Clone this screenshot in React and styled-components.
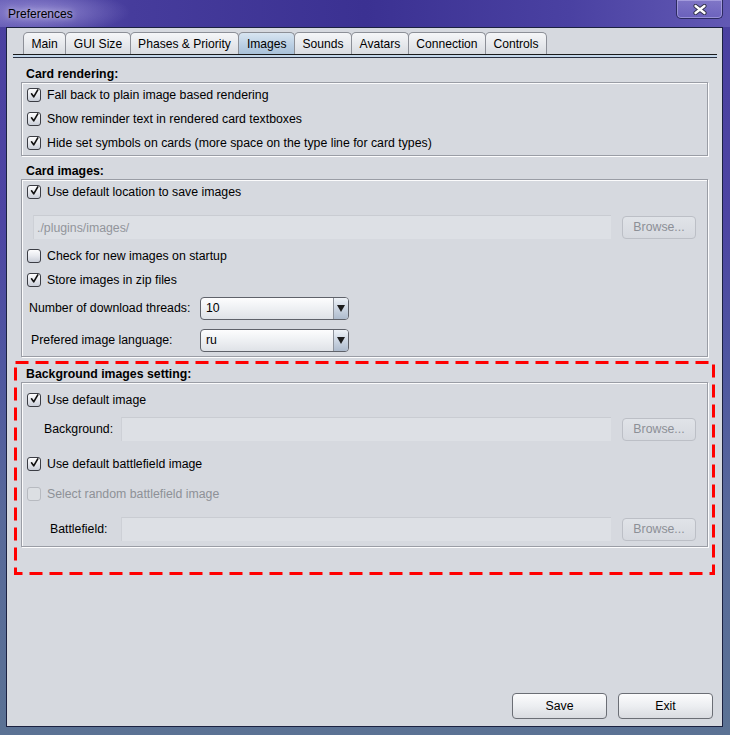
import React from "react";
import styled, { createGlobalStyle } from "styled-components";

const GlobalStyle = createGlobalStyle`
  body {
    margin: 0;
    font-family: "Liberation Sans", Arial, sans-serif;
  }
`;

const tabs = ["Main", "GUI Size", "Phases & Priority", "Images", "Sounds", "Avatars", "Connection", "Controls"];

const Check = ({ checked, disabled }) => (
  <Box $disabled={disabled}>
    {checked && (
      <svg width="14" height="14" viewBox="0 0 14 14">
        <path d="M3.2 6.8 L6 10.6 L11.2 1.8" fill="none" stroke="#111" strokeWidth="2.1" strokeLinecap="round" strokeLinejoin="round" />
      </svg>
    )}
  </Box>
);

const CheckRow = ({ label, checked, disabled, gap }) => (
  <Row $gap={gap}>
    <Check checked={checked} disabled={disabled} />
    <Label $disabled={disabled}>{label}</Label>
  </Row>
);

const Combo = ({ value }) => (
  <ComboBox>
    <ComboText>{value}</ComboText>
    <ComboArrow>
      <svg width="8" height="7" viewBox="0 0 8 7">
        <path d="M0 0 H8 L4 7 Z" fill="#1c1c1c" />
      </svg>
    </ComboArrow>
  </ComboBox>
);

const App = () => {
  return (
    <Window>
      <GlobalStyle />
      <TitleBar>
        <Title>Preferences</Title>
        <CloseButton>
          <svg width="14" height="11" viewBox="0 0 14 11">
            <path d="M2.5 2 L11.5 9 M11.5 2 L2.5 9" stroke="#33334a" strokeWidth="4.2" strokeLinecap="round" />
            <path d="M2.5 2 L11.5 9 M11.5 2 L2.5 9" stroke="#fff" strokeWidth="2.3" strokeLinecap="round" />
          </svg>
        </CloseButton>
      </TitleBar>
      <Panel>
        <TabStrip>
          {tabs.map((t) => (
            <Tab key={t} $active={t === "Images"}>{t}</Tab>
          ))}
        </TabStrip>
        <TabLine />
        <Content>
          <SectionTitle>Card rendering:</SectionTitle>
          <Group>
            <CheckRow checked label="Fall back to plain image based rendering" />
            <CheckRow checked label="Show reminder text in rendered card textboxes" />
            <CheckRow checked label="Hide set symbols on cards (more space on the type line for card types)" />
          </Group>

          <SectionTitle>Card images:</SectionTitle>
          <Group>
            <CheckRow checked label="Use default location to save images" />
            <FieldRow $left={11} $top={11} $bottom={5}>
              <Field>./plugins/images/</Field>
              <Browse>Browse...</Browse>
            </FieldRow>
            <CheckRow label="Check for new images on startup" />
            <CheckRow checked label="Store images in zip files" />
            <ComboRow>
              <ComboLabel $pad={7}>Number of download threads:</ComboLabel>
              <Combo value="10" />
            </ComboRow>
            <ComboRow>
              <ComboLabel $pad={9}>Prefered image language:</ComboLabel>
              <Combo value="ru" />
            </ComboRow>
          </Group>

          <Highlight>
            <DashFrame width="701" height="214" viewBox="0 0 701 214">
              <rect x="1.5" y="1.5" width="698" height="211" fill="none" stroke="#ff0000" strokeWidth="3" strokeDasharray="13 7" />
            </DashFrame>
            <SectionTitle>Background images setting:</SectionTitle>
            <Group $padTop={5}>
              <CheckRow checked label="Use default image" />
              <FieldRow $top={5} $bottom={11}>
                <FieldLabel $pad={22}>Background:</FieldLabel>
                <Field />
                <Browse>Browse...</Browse>
              </FieldRow>
              <CheckRow checked label="Use default battlefield image" />
              <CheckRow disabled gap={6} label="Select random battlefield image" />
              <FieldRow $top={11} $bottom={5}>
                <FieldLabel $pad={28}>Battlefield:</FieldLabel>
                <Field />
                <Browse>Browse...</Browse>
              </FieldRow>
            </Group>
          </Highlight>
        </Content>
        <Footer>
          <Button>Save</Button>
          <Button>Exit</Button>
        </Footer>
      </Panel>
    </Window>
  );
};

const Window = styled.div`
  width: 730px;
  height: 735px;
  display: flex;
  flex-direction: column;
  overflow: hidden;
  background: linear-gradient(180deg, #4a40a0 0%, #4d45a3 30%, #4f57a0 50%, #58699a 70%, #5b7294 100%);
`;

const TitleBar = styled.div`
  height: 27px;
  flex-shrink: 0;
  display: flex;
  align-items: flex-start;
  justify-content: space-between;
  padding: 0 7px 0 8px;
  background:
    radial-gradient(ellipse 90px 22px at 40px 12px, rgba(190, 180, 240, 0.55), rgba(190, 180, 240, 0) 100%),
    linear-gradient(90deg, #5e55b0 0%, #463c9c 18%, #3b3192 50%, #4a41a2 78%, #6259b4 100%);
`;

const Title = styled.div`
  font-family: "Liberation Sans", Arial, sans-serif;
  font-size: 12px;
  color: #000;
  line-height: 14px;
  padding-top: 7px;
  text-shadow: 0 0 6px rgba(255, 255, 255, 0.8);
`;

const CloseButton = styled.div`
  width: 45px;
  height: 18px;
  display: flex;
  align-items: center;
  justify-content: center;
  border: 1px solid #2c2a60;
  border-top: none;
  border-radius: 0 0 5px 5px;
  background: linear-gradient(180deg, rgba(160, 150, 220, 0.5), rgba(120, 110, 200, 0.5));
  box-shadow: inset 0 0 0 1px rgba(220, 215, 255, 0.4);
`;

const Panel = styled.div`
  flex: 1;
  margin: 0 7px 8px 6px;
  border: 1px solid #1b2140;
  background: #d6d9df;
  display: flex;
  flex-direction: column;
  min-height: 0;
`;

const TabStrip = styled.div`
  display: flex;
  padding: 4px 0 0 16px;
  height: 22px;
`;

const Tab = styled.div`
  height: 22px;
  box-sizing: border-box;
  padding: 0 7.5px;
  margin-right: -1px;
  display: flex;
  align-items: center;
  font-size: 12.1px;
  color: #000;
  border: 1px solid #8c8f97;
  border-bottom: none;
  border-radius: 5px 5px 0 0;
  background: ${(p) =>
    p.$active
      ? "linear-gradient(180deg, #d8e5f1 0%, #bcd0e4 55%, #a9c1d9 100%)"
      : "linear-gradient(180deg, #f5f6f8 0%, #e6e8ec 55%, #d9dce1 100%)"};
`;

const TabLine = styled.div`
  height: 2px;
  margin: 0 5px 0 6px;
  border-top: 1px solid #1a1a1a;
  border-bottom: 1px solid #2a3040;
  background: #c4d7ea;
`;

const Content = styled.div`
  padding: 1px 14px 0;
  display: flex;
  flex-direction: column;
`;

const SectionTitle = styled.div`
  height: 23px;
  box-sizing: border-box;
  padding: 7px 0 0 5px;
  font-size: 12.3px;
  line-height: 16px;
  font-weight: bold;
  color: #000;
`;

const Group = styled.div`
  border: 1px solid #9a9da5;
  box-shadow: 1px 1px 0 #fdfdfe, inset 1px 1px 0 #fbfbfc;
  padding-top: ${(p) => p.$padTop || 0}px;
  display: flex;
  flex-direction: column;
`;

const Row = styled.div`
  height: 24px;
  margin-top: ${(p) => p.$gap || 0}px;
  display: flex;
  align-items: center;
  padding-left: 5px;
`;

const Box = styled.div`
  width: 14px;
  height: 14px;
  box-sizing: border-box;
  border: 1px solid ${(p) => (p.$disabled ? "#b7bac0" : "#3b3d44")};
  border-radius: 3px;
  background: ${(p) =>
    p.$disabled
      ? "#dcdfe3"
      : "linear-gradient(180deg, #fdfdfe 0%, #e7e9ee 50%, #c9ced8 100%)"};
  display: flex;
  align-items: center;
  justify-content: center;
  flex-shrink: 0;

  svg {
    margin-top: -3px;
    margin-left: 1px;
  }
`;

const Label = styled.span`
  margin-left: 6px;
  font-size: 12.3px;
  color: ${(p) => (p.$disabled ? "#8e9197" : "#000")};
`;

const FieldRow = styled.div`
  display: flex;
  align-items: center;
  padding: ${(p) => p.$top}px 11px ${(p) => p.$bottom}px ${(p) => p.$left || 0}px;
`;

const FieldLabel = styled.div`
  width: 99px;
  box-sizing: border-box;
  padding-left: ${(p) => p.$pad}px;
  font-size: 12.3px;
  color: #000;
  flex-shrink: 0;
`;

const Field = styled.div`
  flex: 1;
  height: 24px;
  box-sizing: border-box;
  padding-left: 3px;
  display: flex;
  align-items: center;
  background: #dde0e5;
  border-top: 1px solid #c9ccd2;
  border-left: 1px solid #cdd0d6;
  font-size: 12.3px;
  color: #92959b;
`;

const Browse = styled.div`
  width: 74px;
  height: 23px;
  margin-left: 11px;
  box-sizing: border-box;
  border: 1px solid #bcbfc6;
  border-radius: 4px;
  background: linear-gradient(180deg, #e0e3e8 0%, #d6d9df 100%);
  display: flex;
  align-items: center;
  justify-content: center;
  font-size: 12.3px;
  color: #8c8f96;
`;

const ComboRow = styled.div`
  height: 32px;
  display: flex;
  align-items: center;
`;

const ComboLabel = styled.div`
  width: 178px;
  box-sizing: border-box;
  padding-left: ${(p) => p.$pad}px;
  font-size: 12.3px;
  color: #000;
`;

const ComboBox = styled.div`
  width: 149px;
  height: 23px;
  box-sizing: border-box;
  border: 1px solid #5f626a;
  border-radius: 4px;
  display: flex;
  overflow: hidden;
  background: linear-gradient(180deg, #fdfdfe 0%, #eef0f3 50%, #dfe2e7 100%);
`;

const ComboText = styled.div`
  flex: 1;
  padding-left: 5px;
  display: flex;
  align-items: center;
  font-size: 12.3px;
  color: #000;
`;

const ComboArrow = styled.div`
  width: 14px;
  border-left: 1px solid #8e939c;
  display: flex;
  align-items: center;
  justify-content: center;
  background: linear-gradient(180deg, #eef2f7 0%, #c9d3e0 55%, #aebbcd 100%);
`;

const Highlight = styled.div`
  position: relative;
  margin-top: 2px;
`;

const DashFrame = styled.svg`
  position: absolute;
  top: 2px;
  left: -7px;
  pointer-events: none;
`;

const Footer = styled.div`
  margin-top: auto;
  display: flex;
  justify-content: flex-end;
  gap: 11px;
  padding: 0 9px 7px 0;
`;

const Button = styled.div`
  width: 95px;
  height: 26px;
  box-sizing: border-box;
  border: 1px solid #6b6e75;
  border-radius: 4px;
  background: linear-gradient(180deg, #fcfcfd 0%, #eceef1 50%, #d9dbe0 100%);
  display: flex;
  align-items: center;
  justify-content: center;
  font-size: 12.3px;
  color: #000;
`;

export default App;
